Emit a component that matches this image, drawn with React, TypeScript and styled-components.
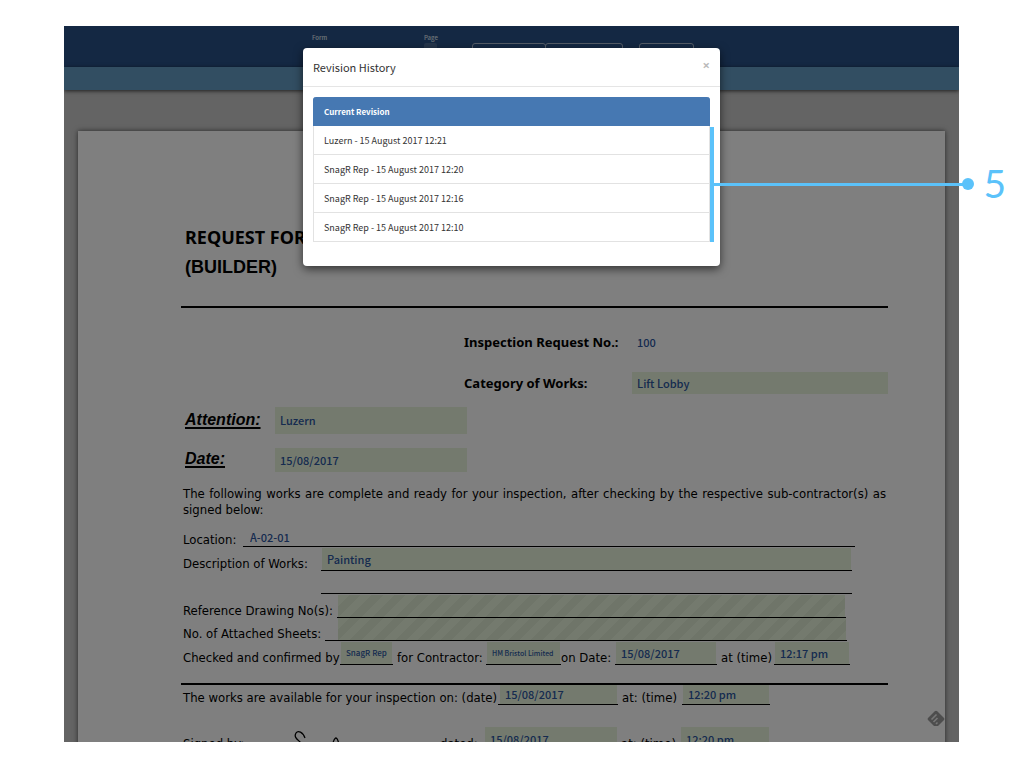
import React from "react";
import styled, { createGlobalStyle, css } from "styled-components";

const ui = `"Noto Sans CJK SC", "Open Sans", sans-serif`;
const headings = `"Noto Sans", sans-serif`;
const doc = `"DejaVu Sans Condensed", "DejaVu Sans", sans-serif`;
const sky = "#5bc2fa";

const Global = createGlobalStyle`
  * { box-sizing: border-box; }
  body { margin: 0; background: #fff; }
  button, input { font: inherit; margin: 0; }
`;

const Stage = styled.main`
  position: relative;
  height: 100vh;
  padding: 26px 65px 26px 64px;
`;

const Shot = styled.div`
  position: relative;
  height: 100%;
  overflow: hidden;
  background: #c8c8c8;
  font-family: ${ui};
`;

const TopBar = styled.header`
  display: flex;
  align-items: flex-start;
  justify-content: center;
  height: 41px;
  padding: 6px 17px 0 0;
  background: #285086;
  color: #dfe6ef;
`;

const BarField = styled.label<{ $width: number }>`
  display: flex;
  flex-direction: column;
  width: ${(p) => p.$width}px;
  font-size: 6px;
  font-weight: 500;
  line-height: 11px;
`;

const BarInput = styled.input<{ $width: number }>`
  width: ${(p) => p.$width}px;
  height: 14px;
  padding: 0 2px;
  border: 0;
  border-radius: 2px;
  background: rgba(255, 255, 255, 0.16);
  color: #fff;
  font-size: 8px;
`;

const FormName = styled.span`
  padding-top: 4px;
  font-size: 9px;
  line-height: 14px;
`;

const ButtonGroup = styled.div`
  display: flex;
  margin-top: 11px;
`;

const BarButton = styled.button<{ $width: number; $gap?: number }>`
  width: ${(p) => p.$width}px;
  height: 17px;
  margin-left: ${(p) => p.$gap ?? -1}px;
  padding: 0;
  border: 1px solid #a9b9cf;
  border-radius: 3px;
  background: none;
  color: #fff;
  font-size: 8px;
  line-height: 15px;
`;

const SubBar = styled.div`
  position: relative;
  height: 23px;
  background: #649cc4;
  box-shadow: 0 1px 4px rgba(0, 0, 0, 0.7);
`;

const Paper = styled.article`
  min-height: 700px;
  margin: 41px 14px 0;
  padding: 91px 57px 0 103px;
  background: #fff;
  box-shadow: 0 0 5px rgba(0, 0, 0, 0.6);
  color: #000;
  font-family: ${doc};
  font-size: 13px;
  line-height: 16px;
`;

const Title = styled.h1`
  margin: 0;
  padding-left: 4px;
  font-family: ${headings};
  font-size: 18px;
  line-height: 30px;
  white-space: nowrap;
`;

const Subtitle = styled.span`
  display: block;
  font-family: "Liberation Sans", Arial, sans-serif;
`;

const Rule = styled.hr<{ $top: number; $bottom?: number }>`
  height: 2px;
  margin: ${(p) => p.$top}px 0 ${(p) => p.$bottom ?? 0}px;
  border: 0;
  background: #000;
`;

const HeadRow = styled.div<{ $top?: number; $cols: string }>`
  display: grid;
  grid-template-columns: ${(p) => p.$cols};
  align-items: center;
  margin-top: ${(p) => p.$top ?? 0}px;
`;

const BoldLabel = styled.label`
  grid-column: 2;
  font-family: ${headings};
  font-weight: 700;
  white-space: nowrap;
`;

const LeadLabel = styled.label`
  padding: 0 0 2px 4px;
  font: italic 700 16px/20px "Liberation Sans", Arial, sans-serif;
  text-decoration: underline;
  text-decoration-thickness: 2px;
  text-underline-offset: 2px;
`;

const Intro = styled.p`
  margin: 14px 2px 6px;
  text-align: justify;
`;

const Line = styled.div<{ $h?: number; $cols: string }>`
  display: grid;
  grid-template-columns: ${(p) => p.$cols};
  align-items: end;
  height: ${(p) => p.$h ?? 24}px;
  padding-left: 2px;
`;

const Label = styled.label<{ $indent?: number }>`
  padding-left: ${(p) => p.$indent ?? 0}px;
  line-height: 14px;
  white-space: nowrap;
`;

const Blank = styled.div<{ $pad?: number; $h?: number }>`
  display: flex;
  align-items: flex-end;
  height: ${(p) => p.$h ?? 23}px;
  padding: 0 1px 0 ${(p) => p.$pad ?? 1}px;
  border-bottom: 1px solid #000;
`;

type FieldLook = { $h?: number; $size?: number; $look?: "plain" | "hatched" };

const Field = styled.input<FieldLook>`
  display: block;
  width: 100%;
  min-width: 0;
  height: ${(p) => p.$h ?? 22}px;
  padding: 0 5px 1px;
  border: 0;
  background: #e8f5dd;
  color: #2c569f;
  font-family: ${ui};
  font-size: ${(p) => p.$size ?? 11}px;
  font-weight: 500;
  line-height: 16px;
  ${(p) => p.$look === "plain" && css`background: none;`}
  ${(p) =>
    p.$look === "hatched" &&
    css`background: repeating-linear-gradient(135deg, #e8f5dd 0 8px, #deebd2 8px 16px);`}
`;

const SignRow = styled(Line)`
  margin-top: 22px;
`;

const Signature = styled.svg`
  width: 60px;
  height: 24px;
`;

const FeedBadge = styled.svg`
  position: absolute;
  right: 14px;
  bottom: 14px;
  width: 18px;
  height: 18px;
`;

const Backdrop = styled.div`
  position: absolute;
  inset: 0;
  display: flex;
  align-items: flex-start;
  justify-content: center;
  padding-top: 22px;
  background: rgba(0, 0, 0, 0.5);
`;

const Dialog = styled.section`
  width: 417px;
  padding-bottom: 14px;
  border-radius: 4px;
  background: #fff;
  box-shadow: 0 3px 10px rgba(0, 0, 0, 0.6);
  color: #333;
`;

const DialogHead = styled.header`
  display: flex;
  align-items: center;
  justify-content: space-between;
  height: 39px;
  padding: 0 10px;
  border-bottom: 1px solid #e5e5e5;
`;

const DialogTitle = styled.h2`
  margin: 0;
  font-size: 11px;
  font-weight: 400;
  line-height: 16px;
`;

const Close = styled.button`
  padding: 0 0 5px;
  border: 0;
  background: none;
  color: #bbb;
  font: 700 13px/16px "Open Sans", sans-serif;
`;

const Revisions = styled.ul`
  position: relative;
  margin: 10px;
  padding: 0;
  list-style: none;
`;

const Revision = styled.li<{ $current?: boolean }>`
  display: flex;
  align-items: center;
  height: 29px;
  padding: 0 10px;
  border: 1px solid #e2e2e2;
  border-top: 0;
  font-size: 9px;
  ${(p) =>
    p.$current &&
    css`
      border-color: #4678b2;
      border-radius: 3px 3px 0 0;
      background: #4678b2;
      color: #fff;
      font-size: 8px;
      font-weight: 700;
    `}
`;

const Bracket = styled.li`
  position: absolute;
  top: 30px;
  right: -4px;
  bottom: 0;
  width: 4px;
  background: ${sky};
`;

const Callout = styled.div`
  position: absolute;
  top: 164px;
  right: 18px;
  left: calc(50% + 201px);
  display: flex;
  align-items: center;
  height: 40px;
  color: ${sky};
  font: 400 39px/40px Lato, sans-serif;
`;

const Leader = styled.span`
  flex: 1;
  height: 3px;
  background: ${sky};
`;

const Dot = styled.span`
  width: 12px;
  height: 12px;
  margin: 0 9px 0 -2px;
  border-radius: 50%;
  background: ${sky};
`;

const Step = styled.span`
  padding-bottom: 3px;
`;

const revisions = [
  "Luzern - 15 August 2017 12:21",
  "SnagR Rep - 15 August 2017 12:20",
  "SnagR Rep - 15 August 2017 12:16",
  "SnagR Rep - 15 August 2017 12:10",
];

export default function App() {
  return (
    <Stage>
      <Global />
      <Shot>
        <TopBar>
          <BarField $width={112}>
            Form
            <FormName>Request for Inspection</FormName>
          </BarField>
          <BarField $width={48}>
            Page
            <BarInput $width={13} defaultValue="1" />
          </BarField>
          <ButtonGroup>
            <BarButton $width={74} $gap={0}>Compare</BarButton>
            <BarButton $width={78}>Revision history</BarButton>
            <BarButton $width={55} $gap={16}>Close</BarButton>
          </ButtonGroup>
        </TopBar>
        <SubBar />
        <Paper>
          <Title>
            REQUEST FOR INSPECTION
            <Subtitle>(BUILDER)</Subtitle>
          </Title>
          <Rule $top={24} $bottom={23} />
          <HeadRow $cols="283px 168px 1fr">
            <BoldLabel htmlFor="no">Inspection Request No.:</BoldLabel>
            <Field id="no" $look="plain" defaultValue="100" />
          </HeadRow>
          <HeadRow $top={19} $cols="283px 168px 1fr">
            <BoldLabel htmlFor="cat">Category of Works:</BoldLabel>
            <Field id="cat" defaultValue="Lift Lobby" />
          </HeadRow>
          <HeadRow $top={13} $cols="94px 192px">
            <LeadLabel htmlFor="att">Attention:</LeadLabel>
            <Field id="att" $h={27} defaultValue="Luzern" />
          </HeadRow>
          <HeadRow $top={14} $cols="94px 192px">
            <LeadLabel htmlFor="date">Date:</LeadLabel>
            <Field id="date" $h={24} defaultValue="15/08/2017" />
          </HeadRow>
          <Intro>
            The following works are complete and ready for your inspection, after checking by the
            respective sub-contractor(s) as signed below:
          </Intro>
          <Line $h={23} $cols="60px 1fr 33px">
            <Label htmlFor="loc">Location:</Label>
            <Blank $pad={2}>
              <Field id="loc" $look="plain" $h={18} defaultValue="A-02-01" />
            </Blank>
          </Line>
          <Line $cols="138px 1fr 36px">
            <Label htmlFor="desc">Description of Works:</Label>
            <Blank>
              <Field id="desc" defaultValue="Painting" />
            </Blank>
          </Line>
          <Line $h={23} $cols="138px 1fr 36px">
            <span />
            <Blank />
          </Line>
          <Line $cols="154px 1fr 42px">
            <Label htmlFor="ref">Reference Drawing No(s):</Label>
            <Blank>
              <Field id="ref" $look="hatched" />
            </Blank>
          </Line>
          <Line $h={23} $cols="142px 1fr 41px">
            <Label htmlFor="sheets">No. of Attached Sheets:</Label>
            <Blank $pad={13}>
              <Field id="sheets" $look="hatched" />
            </Blank>
          </Line>
          <Line $cols="157px 53px 93px 75px 54px 1fr 57px 76px 38px">
            <Label htmlFor="by">Checked and confirmed by</Label>
            <Blank>
              <Field id="by" $size={8} defaultValue="SnagR Rep" />
            </Blank>
            <Label htmlFor="contractor" $indent={4}>for Contractor:</Label>
            <Blank>
              <Field id="contractor" $size={7} defaultValue="HM Bristol Limited" />
            </Blank>
            <Label htmlFor="on">on Date:</Label>
            <Blank>
              <Field id="on" defaultValue="15/08/2017" />
            </Blank>
            <Label htmlFor="time" $indent={4}>at (time)</Label>
            <Blank>
              <Field id="time" defaultValue="12:17 pm" />
            </Blank>
          </Line>
          <Rule $top={18} />
          <Line $h={20} $cols="315px 120px 64px 88px">
            <Label htmlFor="avail">The works are available for your inspection on: (date)</Label>
            <Blank $h={20} $pad={2}>
              <Field id="avail" $h={19} defaultValue="15/08/2017" />
            </Blank>
            <Label htmlFor="availTime" $indent={4}>at: (time)</Label>
            <Blank $h={20}>
              <Field id="availTime" $h={19} defaultValue="12:20 pm" />
            </Blank>
          </Line>
          <SignRow $cols="110px 147px 45px 132px 64px 88px">
            <Label htmlFor="signed">Signed by:</Label>
            <Signature viewBox="0 0 60 24" fill="none" stroke="#000" strokeWidth="1.3">
              <path d="M12 11C10 5 5 3 3 6C0 11 6 13 10 18M39 20C41 10 44 7 46 18" />
            </Signature>
            <Label htmlFor="signed">dated:</Label>
            <Field id="signed" $h={24} defaultValue="15/08/2017" />
            <Label htmlFor="signedTime" $indent={4}>at: (time)</Label>
            <Field id="signedTime" $h={24} defaultValue="12:20 pm" />
          </SignRow>
        </Paper>
        <FeedBadge viewBox="0 0 18 18">
          <path d="M7.500 1.500Q9 0 10.500 1.500L17 8Q18 9 17 10L11 16H7L1 10Q0 9 1 8Z" fill="#9a9a9a" />
          <path d="M4.500 9.500L9.500 4.500M6.500 12L10.500 8M9 14L10.500 12.500" stroke="#eee" strokeWidth="1.6" />
        </FeedBadge>
        <Backdrop>
          <Dialog role="dialog" aria-labelledby="dialog-title">
            <DialogHead>
              <DialogTitle id="dialog-title">Revision History</DialogTitle>
              <Close aria-label="Close">×</Close>
            </DialogHead>
            <Revisions>
              <Revision $current>Current Revision</Revision>
              {revisions.map((r) => (
                <Revision key={r}>{r}</Revision>
              ))}
              <Bracket aria-hidden="true" />
            </Revisions>
          </Dialog>
        </Backdrop>
      </Shot>
      <Callout>
        <Leader />
        <Dot />
        <Step>5</Step>
      </Callout>
    </Stage>
  );
}
